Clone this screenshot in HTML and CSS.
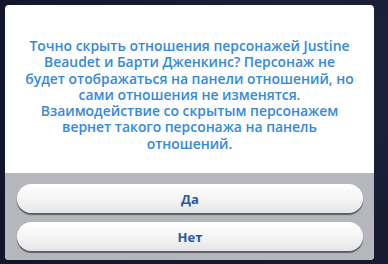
FILE: index.html
```html
<!DOCTYPE html>
<html lang="ru">
<head>
  <meta charset="UTF-8">
  <meta name="viewport" content="width=device-width, initial-scale=1.0">
  <title>Скрыть отношения</title>
  <link rel="stylesheet" href="styles.css">
</head>
<body>
  <div class="dialog">
    <div class="dialog-body">
      <p>Точно скрыть отношения персонажей Justine<br>Beaudet и Барти Дженкинс? Персонаж не<br>будет отображаться на панели отношений, но<br>сами отношения не изменятся.<br>Взаимодействие со скрытым персонажем<br>вернет такого персонажа на панель<br>отношений.</p>
    </div>
    <div class="dialog-buttons">
      <button>Да</button>
      <button>Нет</button>
    </div>
  </div>
</body>
</html>
```

FILE: styles.css
```css
body {
  margin: 0;
  padding: 0;
  width: 388px;
  height: 264px;
  overflow: hidden;
  background: radial-gradient(circle at 80% 30%, #1f2440 0%, #171a30 50%, #12152a 100%);
  font-family: "Open Sans", "Noto Sans", sans-serif;
}
.dialog {
  margin: 5px 0 0 5px;
  width: 369px;
  height: 255px;
  background: #fff;
  border-radius: 4px;
  overflow: hidden;
  display: flex;
  flex-direction: column;
}
.dialog-body {
  height: 168px;
  box-sizing: border-box;
  padding: 33px 4px 0;
}
.dialog-body p {
  margin: 0;
  text-align: center;
  color: #3589d9;
  font-size: 13.9px;
  font-weight: 600;
  line-height: 16.3px;
  white-space: nowrap;
}
.dialog-buttons {
  flex: 1;
  background: #b5b7bc;
  padding: 11px 11px 0 12px;
  display: flex;
  flex-direction: column;
  gap: 9px;
}
.dialog-buttons button {
  height: 29px;
  border: none;
  border-radius: 15px;
  background: linear-gradient(#ffffff, #f2f2f3 60%, #e4e5e8);
  box-shadow: 0 2px 1px #5d5f66, 0 1px 0 #8a8c92;
  color: #2759a8;
  font-family: "Open Sans", "Noto Sans", sans-serif;
  font-size: 13px;
  font-weight: 700;
  cursor: pointer;
}
```
